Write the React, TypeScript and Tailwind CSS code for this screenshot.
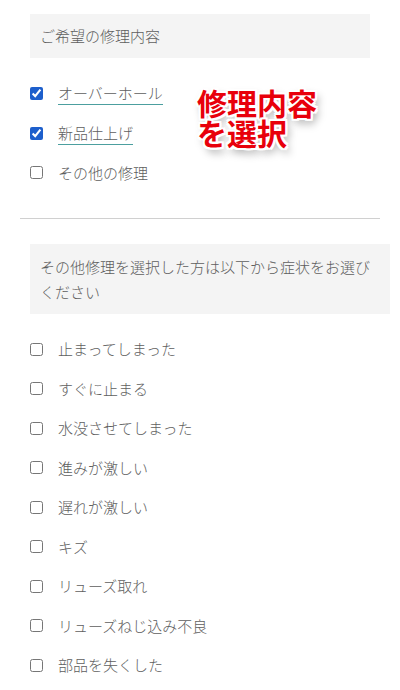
const repairs = [
  { label: 'オーバーホール', checked: true },
  { label: '新品仕上げ', checked: true },
  { label: 'その他の修理', checked: false },
];

const symptoms = [
  '止まってしまった',
  'すぐに止まる',
  '水没させてしまった',
  '進みが激しい',
  '遅れが激しい',
  'キズ',
  'リューズ取れ',
  'リューズねじ込み不良',
  '部品を失くした',
];

const CheckRow = ({ label, checked, underline }: { label: string; checked: boolean; underline?: boolean }) => (
  <label className="flex h-[39.5px] items-center">
    <input
      type="checkbox"
      defaultChecked={checked}
      className="ml-[30px] h-[13px] w-[13px] accent-[#1d5fcc]"
    />
    <span
      className={
        underline
          ? 'ml-[15px] inline-block border-b border-[#4c9f9f] leading-[22px]'
          : 'ml-[15px] inline-block leading-[22px]'
      }
    >
      {label}
    </span>
  </label>
);

export default function App() {
  return (
    <div
      className="relative min-h-[690px] w-[400px] bg-white pt-[14px] text-[15px] font-light text-[#5e5e5e]"
      style={{ fontFamily: '"Noto Sans CJK JP", "Noto Sans", sans-serif' }}
    >
      <div className="ml-[30px] flex h-[44px] w-[340px] items-center bg-[#f4f4f4] px-[10px]">
        ご希望の修理内容
      </div>

      <div className="mt-[16px]">
        {repairs.map((r) => (
          <CheckRow key={r.label} label={r.label} checked={r.checked} underline={r.checked} />
        ))}
      </div>

      <div className="mx-[20px] mt-[25px] border-t border-[#d0d0d0]" />

      <div className="ml-[30px] mt-[25px] w-[360px] bg-[#f4f4f4] px-[10px] py-[10px] leading-[25px]">
        その他修理を選択した方は以下から症状をお選びください
      </div>

      <div className="mt-[16px]">
        {symptoms.map((s) => (
          <CheckRow key={s} label={s} checked={false} />
        ))}
      </div>

      {/* red callout over the list */}
      <div className="absolute left-[197px] top-[87px] flex flex-col text-[30px] font-bold leading-[30px] text-[#e8000b] [text-shadow:2px_0_0_#fff,-2px_0_0_#fff,0_2px_0_#fff,0_-2px_0_#fff,2px_2px_0_#fff,-2px_-2px_0_#fff,2px_-2px_0_#fff,-2px_2px_0_#fff,3px_5px_8px_rgba(0,0,0,0.4)]">
        <span>修理内容</span>
        <span>を選択</span>
      </div>
    </div>
  );
}
